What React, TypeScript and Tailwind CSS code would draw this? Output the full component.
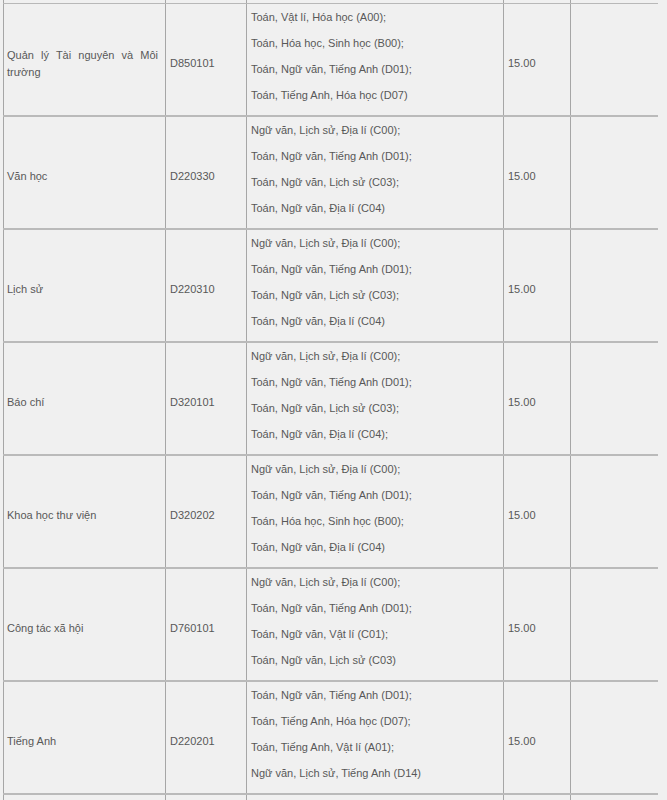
const rows = [
  {
    name: 'Quản lý Tài nguyên và Môi trường',
    code: 'D850101',
    subjects: [
      'Toán, Vật lí, Hóa học (A00);',
      'Toán, Hóa học, Sinh học (B00);',
      'Toán, Ngữ văn, Tiếng Anh (D01);',
      'Toán, Tiếng Anh, Hóa học (D07)',
    ],
  },
  {
    name: 'Văn học',
    code: 'D220330',
    subjects: [
      'Ngữ văn, Lịch sử, Địa lí (C00);',
      'Toán, Ngữ văn, Tiếng Anh (D01);',
      'Toán, Ngữ văn, Lịch sử (C03);',
      'Toán, Ngữ văn, Địa lí (C04)',
    ],
  },
  {
    name: 'Lịch sử',
    code: 'D220310',
    subjects: [
      'Ngữ văn, Lịch sử, Địa lí (C00);',
      'Toán, Ngữ văn, Tiếng Anh (D01);',
      'Toán, Ngữ văn, Lịch sử (C03);',
      'Toán, Ngữ văn, Địa lí (C04)',
    ],
  },
  {
    name: 'Báo chí',
    code: 'D320101',
    subjects: [
      'Ngữ văn, Lịch sử, Địa lí (C00);',
      'Toán, Ngữ văn, Tiếng Anh (D01);',
      'Toán, Ngữ văn, Lịch sử (C03);',
      'Toán, Ngữ văn, Địa lí (C04);',
    ],
  },
  {
    name: 'Khoa học thư viện',
    code: 'D320202',
    subjects: [
      'Ngữ văn, Lịch sử, Địa lí (C00);',
      'Toán, Ngữ văn, Tiếng Anh (D01);',
      'Toán, Hóa học, Sinh học (B00);',
      'Toán, Ngữ văn, Địa lí (C04)',
    ],
  },
  {
    name: 'Công tác xã hội',
    code: 'D760101',
    subjects: [
      'Ngữ văn, Lịch sử, Địa lí (C00);',
      'Toán, Ngữ văn, Tiếng Anh (D01);',
      'Toán, Ngữ văn, Vật lí (C01);',
      'Toán, Ngữ văn, Lịch sử (C03)',
    ],
  },
  {
    name: 'Tiếng Anh',
    code: 'D220201',
    subjects: [
      'Toán, Ngữ văn, Tiếng Anh (D01);',
      'Toán, Tiếng Anh, Hóa học (D07);',
      'Toán, Tiếng Anh, Vật lí (A01);',
      'Ngữ văn, Lịch sử, Tiếng Anh (D14)',
    ],
  },
];

const grid = 'grid grid-cols-[162px_81px_257px_67px_88px]';
const cell = 'border-l border-[#a6a6a6]';

const App = () => {
  return (
    <div
      className="w-[667px] h-[800px] overflow-hidden bg-[#f0f0f0] pl-[3px] text-[11px] text-[#585858]"
      style={{ fontFamily: '"Liberation Sans", Arial, sans-serif' }}
    >
      <div className="w-[655px]">
        {/* tail of the previous row */}
        <div className={`${grid} h-[4px] border-b border-[#b8b8b8]`}>
          <div className={cell} />
          <div className={cell} />
          <div className={cell} />
          <div className={cell} />
          <div className={cell} />
        </div>

        {rows.map((row) => (
          <div key={row.code} className={`${grid} h-[113px] border-b-2 border-[#bababa]`}>
            <div className={`${cell} flex items-center pl-[3px] pr-[7px] pt-[8px]`}>
              <p className="leading-[17px] text-justify">{row.name}</p>
            </div>
            <div className={`${cell} flex items-center px-[4px] pt-[8px]`}>{row.code}</div>
            <div className={`${cell} flex flex-col gap-[10px] px-[4px] pt-[5px]`}>
              {row.subjects.map((s) => (
                <p key={s} className="leading-[16px] whitespace-nowrap">
                  {s}
                </p>
              ))}
            </div>
            <div className={`${cell} flex items-center px-[4px] pt-[8px]`}>15.00</div>
            <div className={cell} />
          </div>
        ))}

        {/* start of the next row */}
        <div className={`${grid} h-[10px]`}>
          <div className={cell} />
          <div className={cell} />
          <div className={cell} />
          <div className={cell} />
          <div className={cell} />
        </div>
      </div>
    </div>
  );
};

export default App;
